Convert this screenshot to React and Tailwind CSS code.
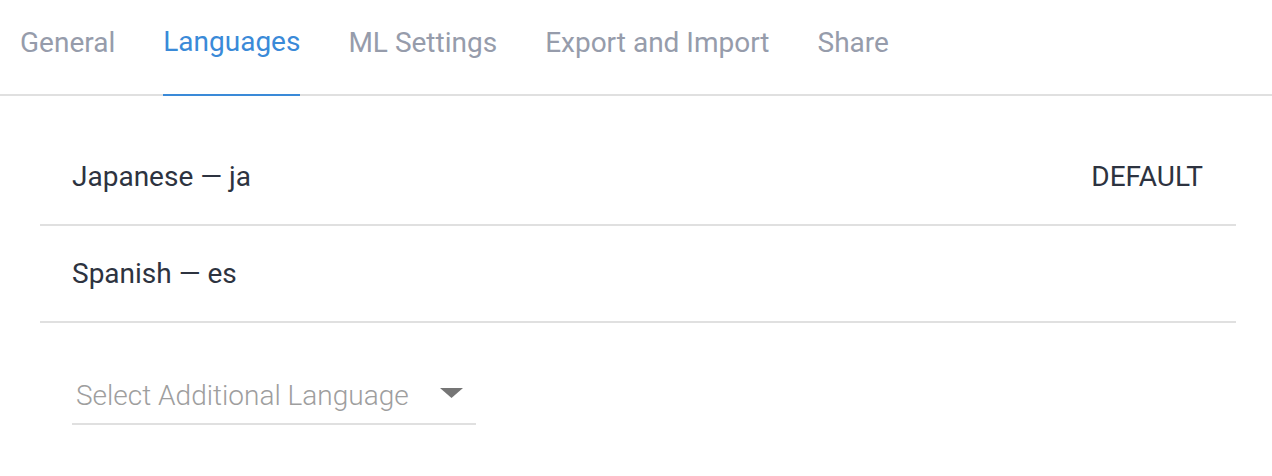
import React from "react";

const tabs = ["General", "Languages", "ML Settings", "Export and Import", "Share"];

const languages = [
  { name: "Japanese", code: "ja", isDefault: true },
  { name: "Spanish", code: "es", isDefault: false },
];

export default function App() {
  return (
    <div
      className="w-[1272px] h-[476px] bg-white text-[#2d3340]"
      style={{ fontFamily: "Roboto, 'Liberation Sans', sans-serif" }}
    >
      <div className="flex gap-[48px] pl-[20px] border-b-2 border-[#e0e0e0] h-[96px]">
        {tabs.map((tab) => {
          const active = tab === "Languages";
          return (
            <div
              key={tab}
              className={
                active
                  ? "flex items-center h-[96px] -mb-[2px] border-b-2 border-[#3a8ad8] text-[#3a8ad8] text-[28px] pb-[10px]"
                  : "flex items-center h-[96px] -mb-[2px] text-[#969cab] text-[28px] pb-[10px]"
              }
            >
              {tab}
            </div>
          );
        })}
      </div>

      <div className="ml-[40px] w-[1196px] pt-[33px]">
        {languages.map((lang) => (
          <div
            key={lang.code}
            className="flex items-center justify-between h-[97px] pl-[32px] pr-[33px] border-b-2 border-[#e0e0e0] text-[28px]"
          >
            <span>
              {lang.name} — {lang.code}
            </span>
            {lang.isDefault && <span>DEFAULT</span>}
          </div>
        ))}

        <div className="pl-[32px] pt-[48px]">
          <div className="flex items-center justify-between w-[404px] h-[54px] border-b-2 border-[#e0e0e0] pl-[4px] pr-[13px]">
            <span className="text-[28px] font-light text-[#9e9e9e] pb-[2px]">
              Select Additional Language
            </span>
            <svg width="23" height="10" viewBox="0 0 23 10" className="mb-[8px]">
              <path d="M0 0H23L11.5 10Z" fill="#757575" />
            </svg>
          </div>
        </div>
      </div>
    </div>
  );
}
